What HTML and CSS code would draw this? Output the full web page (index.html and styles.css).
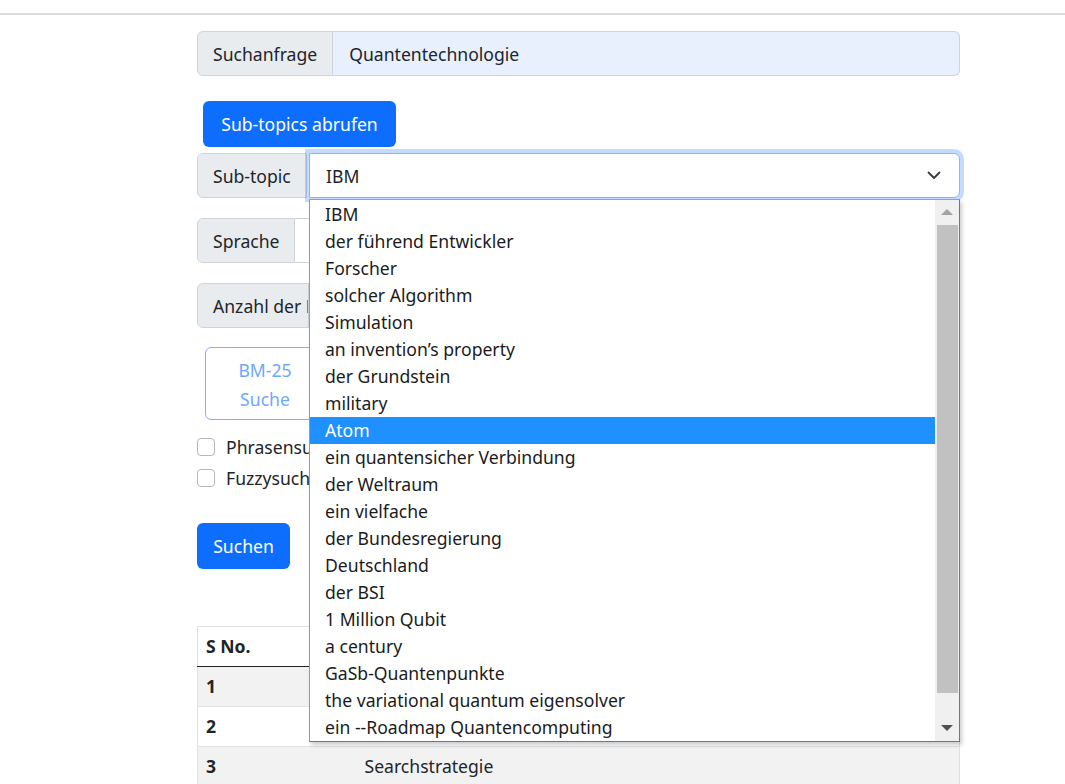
FILE: index.html
```html
<!DOCTYPE html>
<html lang="de">
<head>
<meta charset="utf-8">
<title>Suche</title>
<link rel="stylesheet" href="styles.css">
</head>
<body>
<div class="topbar"></div>
<main class="container">
  <div class="input-group">
    <span class="label">Suchanfrage</span>
    <div class="control autofill">Quantentechnologie</div>
  </div>

  <button class="btn btn-primary btn-topics">Sub-topics abrufen</button>

  <div class="input-group group-sub">
    <span class="label label-sub">Sub-topic</span>
    <div class="control select focused">
      <span>IBM</span>
      <svg class="chevron" width="14" height="9" viewBox="0 0 14 9"><path d="M1.5 1.5 L7 7 L12.5 1.5" fill="none" stroke="#343a40" stroke-width="1.8" stroke-linecap="round" stroke-linejoin="round"/></svg>
    </div>
  </div>

  <div class="input-group group-gap">
    <span class="label label-lang">Sprache</span>
    <div class="control select"></div>
  </div>

  <div class="input-group group-gap">
    <span class="label label-count">Anzahl der Ergebnisse</span>
    <div class="control"></div>
  </div>

  <div class="strategy">
    <div class="strategy-btn">BM-25 Suche</div>
  </div>

  <label class="check"><span class="box"></span><span class="check-text">Phrasensuche</span></label>
  <label class="check"><span class="box"></span><span class="check-text">Fuzzysuche</span></label>

  <button class="btn btn-primary btn-search">Suchen</button>

  <table class="results">
    <thead>
      <tr><th class="c1">S No.</th><th></th></tr>
    </thead>
    <tbody>
      <tr class="odd"><td class="c1">1</td><td></td></tr>
      <tr><td class="c1">2</td><td></td></tr>
      <tr class="odd"><td class="c1">3</td><td>Searchstrategie</td></tr>
    </tbody>
  </table>
</main>

<div class="dropdown">
  <ul class="options">
    <li>IBM</li>
    <li>der führend Entwickler</li>
    <li>Forscher</li>
    <li>solcher Algorithm</li>
    <li>Simulation</li>
    <li>an invention’s property</li>
    <li>der Grundstein</li>
    <li>military</li>
    <li class="active">Atom</li>
    <li>ein quantensicher Verbindung</li>
    <li>der Weltraum</li>
    <li>ein vielfache</li>
    <li>der Bundesregierung</li>
    <li>Deutschland</li>
    <li>der BSI</li>
    <li>1 Million Qubit</li>
    <li>a century</li>
    <li>GaSb-Quantenpunkte</li>
    <li>the variational quantum eigensolver</li>
    <li>ein --Roadmap Quantencomputing</li>
  </ul>
  <div class="scrollbar">
    <span class="arrow-up"></span>
    <span class="thumb"></span>
    <span class="arrow-down"></span>
  </div>
</div>
</body>
</html>
```

FILE: styles.css
```css
* { box-sizing: border-box; }

body {
  margin: 0;
  font-family: "Noto Sans", "Open Sans", sans-serif;
  font-size: 17.6px;
  color: #212529;
  background: #fff;
  position: relative;
  min-height: 784px;
  overflow: hidden;
}

.topbar {
  height: 15px;
  border-bottom: 2px solid #dadada;
}

.container {
  width: 763px;
  margin-left: 197px;
  padding-top: 16px;
}

.input-group {
  display: flex;
  height: 45px;
}

.label {
  display: flex;
  align-items: center;
  padding: 0 15px;
  background: #e9ecef;
  border: 1px solid #ced4da;
  border-radius: 6px 0 0 6px;
  white-space: nowrap;
}

.label-sub { width: 110px; }
.label-lang { width: 98px; }
.label-count { width: 112px; overflow: hidden; }

.control {
  flex: 1;
  display: flex;
  align-items: center;
  padding: 0 16px;
  border: 1px solid #ced4da;
  border-left: 0;
  border-radius: 0 6px 6px 0;
  background: #fff;
}

.autofill { background: #e8f0fe; }

.select { justify-content: space-between; }

.focused {
  border: 1px solid #86b7fe;
  margin-left: 2px;
  box-shadow: 0 0 0 4px rgba(13, 110, 253, 0.25);
}

.chevron { margin-right: 2px; }

.btn {
  display: block;
  border: 0;
  border-radius: 6px;
  font-family: inherit;
  font-size: 17.6px;
  line-height: 24px;
  padding: 11px 0;
  text-align: center;
  color: #fff;
}

.btn-primary { background: #0d6efd; }

.btn-topics {
  margin: 25px 0 0 6px;
  width: 193px;
}

.group-sub { margin-top: 6px; }
.group-gap { margin-top: 20px; }

.strategy {
  margin: 19px 0 0 8px;
}

.strategy-btn {
  width: 120px;
  height: 73px;
  padding-top: 8px;
  border: 1px solid #7eb2fe;
  border-radius: 6px;
  color: #6ea8fe;
  text-align: center;
  line-height: 29px;
  padding-left: 26px;
  padding-right: 26px;
}

.check {
  display: flex;
  align-items: center;
  height: 31px;
  gap: 11px;
}

.check-text {
  width: 83px;
  overflow: hidden;
  white-space: nowrap;
}

.strategy + .check { margin-top: 11px; }

.box {
  width: 18px;
  height: 18px;
  border: 1px solid #b5b9bd;
  border-radius: 4px;
  background: #fff;
}

.btn-search {
  margin-top: 30px;
  width: 93px;
}

.results {
  margin-top: 57px;
  width: 763px;
  border-collapse: collapse;
  border: 1px solid #dee2e6;
}

.results th,
.results td {
  text-align: left;
  padding: 8px;
  height: 40px;
  line-height: 23px;
  border-bottom: 1px solid #dee2e6;
}

.results th { font-weight: 700; border-bottom: 1px solid #212529; }
.results td.c1 { font-weight: 700; }
.results .c1 { width: 159px; }
.results tr.odd td { background: #f2f2f2; }

.dropdown {
  position: absolute;
  left: 309px;
  top: 199px;
  width: 651px;
  height: 543px;
  border: 1px solid #767676;
  border-top-color: #a0a0a0;
  border-left-color: #9a9a9a;
  background: #fff;
  box-shadow: 2px 3px 4px rgba(0, 0, 0, 0.2);
  display: flex;
}

.options {
  list-style: none;
  margin: 0;
  padding: 1px 0 0;
  flex: 1;
}

.options li {
  height: 27px;
  line-height: 27px;
  padding-left: 15px;
  white-space: nowrap;
  color: #1b1b1b;
}

.options li.active {
  background: #1e90ff;
  color: #fff;
}

.scrollbar {
  width: 24px;
  background: #f0f0f0;
  position: relative;
}

.thumb {
  position: absolute;
  left: 2px;
  right: 1px;
  top: 25px;
  height: 468px;
  background: #c1c1c1;
}

.arrow-up,
.arrow-down {
  position: absolute;
  left: 6px;
  width: 0;
  height: 0;
  border-left: 6px solid transparent;
  border-right: 6px solid transparent;
}

.arrow-up {
  top: 9px;
  border-bottom: 6px solid #a3a3a3;
}

.arrow-down {
  bottom: 10px;
  border-top: 6px solid #505050;
}
```
